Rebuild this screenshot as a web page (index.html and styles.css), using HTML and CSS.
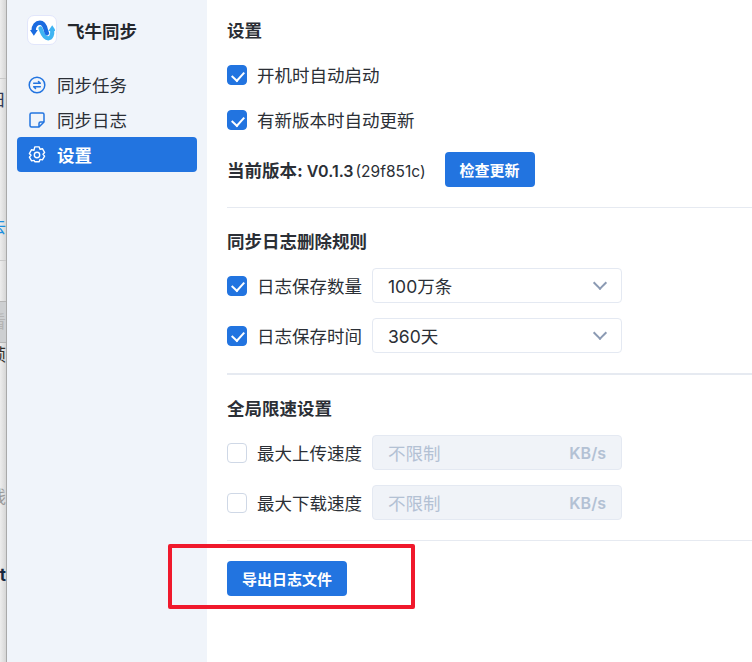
FILE: index.html
```html
<!DOCTYPE html>
<html lang="zh-CN">
<head>
    <meta charset="UTF-8">
    <title>飞牛同步</title>
    <link rel="stylesheet" href="styles.css">
</head>
<body>
    <!-- sliver of the window behind -->
    <div class="behind">
        <div class="behind-line line-a"></div>
        <div class="behind-text text-a">日</div>
        <div class="behind-text text-b">去</div>
        <div class="behind-line line-b"></div>
        <div class="behind-band"><span class="behind-text text-c">看</span></div>
        <div class="behind-text text-d">帧</div>
        <div class="behind-text text-e">线</div>
        <div class="behind-text text-f">t</div>
    </div>

    <div class="app">
        <aside class="sidebar">
            <div class="brand">
                <div class="brand-logo">
                    <svg width="25" height="21" viewBox="0 0 24 20" fill="none">
                        <path d="M10 8c1.500 3 2.500 9.500 7.500 9.500 3 0 4.200-3.500 3.800-7.500" stroke="#3fb4f2" stroke-width="4" stroke-linecap="round"/>
                        <path d="M17.500 10.500h7.500L21.300 5z" fill="#3fb4f2"/>
                        <path d="M3.500 10C3.500 5.500 6 2.500 9.500 2.500c4 0 5 4 5.700 7 .3 1.300.6 2.300 1.100 3" stroke="#1a6be0" stroke-width="4.200" stroke-linecap="round"/>
                        <path d="M0 9.500h7.500L3.700 15z" fill="#1a6be0"/>
                    </svg>
                </div>
                <span class="brand-name">飞牛同步</span>
            </div>
            <nav class="nav">
                <a class="nav-item">
                    <svg class="nav-icon" width="18" height="18" viewBox="0 0 18 18" fill="none" stroke="#2274e0" stroke-width="1.500" stroke-linecap="round" stroke-linejoin="round">
                        <circle cx="9" cy="9" r="7.800"/>
                        <path d="M5.700 7.300h6.600L10.500 5.500"/>
                        <path d="M12.300 10.700H5.700l1.800 1.800"/>
                    </svg>
                    同步任务
                </a>
                <a class="nav-item">
                    <svg class="nav-icon" width="18" height="18" viewBox="0 0 18 18" fill="none" stroke="#2274e0" stroke-width="1.500" stroke-linejoin="round">
                        <path d="M3.500 2h11A1.500 1.500 0 0 1 16 3.500V11l-5 5H3.500A1.500 1.500 0 0 1 2 14.500v-11A1.500 1.500 0 0 1 3.500 2z"/>
                        <path d="M16 11h-3.500a1.500 1.500 0 0 0-1.500 1.500V16" />
                    </svg>
                    同步日志
                </a>
                <a class="nav-item active">
                    <svg class="nav-icon" width="18" height="18" viewBox="0 0 18 18" fill="none" stroke="#fff" stroke-width="1.400" stroke-linejoin="round">
                        <path d="M6.800.9h4.400l.8 2.300 2.400-.5 2.200 3.800-1.600 1.800 1.600 1.800-2.200 3.800-2.400-.5-.8 2.300H6.800L6 14.400l-2.400.5-2.200-3.800L3 9.300 1.400 7.500l2.200-3.800L6 4.200z"/>
                        <circle cx="9" cy="9" r="2.700"/>
                    </svg>
                    设置
                </a>
            </nav>
        </aside>

        <main class="content">
            <section class="section section-general">
                <h2 class="section-title">设置</h2>
                <label class="check-line">
                    <span class="checkbox checked"></span><span class="check-text">开机时自动启动</span>
                </label>
                <label class="check-line">
                    <span class="checkbox checked"></span><span class="check-text">有新版本时自动更新</span>
                </label>
                <div class="version-row">
                    <span class="version"><b>当前版本:</b> <em>V0.1.3</em> <span class="version-hash">(29f851c)</span></span>
                    <button class="btn btn-check">检查更新</button>
                </div>
            </section>

            <section class="section section-log">
                <h2 class="section-title">同步日志删除规则</h2>
                <div class="field-row">
                    <span class="checkbox checked"></span>
                    <span class="field-label">日志保存数量</span>
                    <div class="select">100万条<span class="chevron"></span></div>
                </div>
                <div class="field-row">
                    <span class="checkbox checked"></span>
                    <span class="field-label">日志保存时间</span>
                    <div class="select">360天<span class="chevron"></span></div>
                </div>
            </section>

            <section class="section section-speed">
                <h2 class="section-title">全局限速设置</h2>
                <div class="field-row">
                    <span class="checkbox"></span>
                    <span class="field-label">最大上传速度</span>
                    <div class="input-off">不限制<span class="unit">KB/s</span></div>
                </div>
                <div class="field-row">
                    <span class="checkbox"></span>
                    <span class="field-label">最大下载速度</span>
                    <div class="input-off">不限制<span class="unit">KB/s</span></div>
                </div>
            </section>

            <div class="export">
                <button class="btn btn-export">导出日志文件</button>
            </div>
        </main>
    </div>

    <!-- red box drawn on the screenshot -->
    <div class="annotation"></div>
</body>
</html>
```

FILE: styles.css
```css
* {
    box-sizing: border-box;
}

html, body {
    height: 100%;
}

body {
    margin: 0;
    display: flex;
    overflow: hidden;
    position: relative;
    background-color: #fff;
    color: #2b2f36;
    font-family: Inter, "Noto Sans CJK SC", sans-serif;
    font-size: 17.5px;
}

.behind {
    position: relative;
    flex: 0 0 7px;
    background: linear-gradient(to right, #ededed, #d6d6d6);
    border-right: 1px solid #a9a9a9;
    overflow: hidden;
}

.behind-line {
    position: absolute;
    left: 0;
    right: 0;
    height: 1px;
    background-color: #c9c9c9;
}

.line-a { top: 78px; }
.line-b { top: 260px; }

.behind-band {
    position: absolute;
    top: 301px;
    left: 0;
    right: 0;
    height: 42px;
    background-color: #cdcfd1;
    border-top: 1px solid #b5b5b5;
    border-bottom: 1px solid #b5b5b5;
}

.behind-text {
    position: absolute;
    right: 0;
    font-size: 17px;
    line-height: 18px;
    white-space: nowrap;
}

.text-a { top: 91px; color: #333a55; }
.text-b { top: 218px; color: #1b8fe0; }
.text-c { top: 11px; color: #b4b4b4; }
.text-d { top: 346px; color: #33302a; }
.text-e { top: 488px; color: #9a9a9a; }
.text-f { top: 566px; right: 0; color: #16283f; font-weight: 700; }

.app {
    flex: 1;
    display: flex;
    min-width: 0;
}

.sidebar {
    flex: 0 0 200px;
    padding: 15px 10px 0;
    background-color: #f0f4fa;
}

.brand {
    display: flex;
    align-items: center;
    gap: 10px;
    padding-left: 10px;
    margin-bottom: 22px;
}

.brand-logo {
    display: flex;
    align-items: center;
    justify-content: center;
    width: 30px;
    height: 30px;
    background-color: #fff;
    border: 1px solid #e2e6fb;
    border-radius: 7px;
}

.brand-name {
    font-weight: 700;
    color: #24272d;
}

.nav-item {
    display: flex;
    align-items: center;
    gap: 11px;
    height: 35px;
    padding-left: 11px;
    border-radius: 4px;
    color: #2b2f36;
}

.nav-item.active {
    background-color: #2274e0;
    color: #fff;
    font-weight: 700;
}

.nav-icon {
    flex: none;
}

.content {
    flex: 1;
    min-width: 0;
    padding-left: 20px;
}

.section {
    border-bottom: 1px solid #e6eaf1;
}

.section-title {
    margin: 0;
    font-size: 17.5px;
    font-weight: 700;
    line-height: 24px;
    color: #2b2f36;
}

.section-general {
    height: 208px;
    padding-top: 19px;
}

.section-log {
    height: 167px;
    padding-top: 22px;
    border-bottom-width: 2px;
}

.section-speed {
    height: 166px;
    padding-top: 22px;
}

.check-line {
    display: flex;
    align-items: center;
    gap: 10px;
    height: 20px;
    margin-top: 25px;
}

.section-title + .check-line {
    margin-top: 22px;
}

.check-text {
    margin-top: -2px;
}

.checkbox {
    flex: none;
    position: relative;
    display: block;
    width: 20px;
    height: 20px;
    background-color: #fff;
    border: 1px solid #cfd8e6;
    border-radius: 4px;
}

.checkbox.checked {
    background-color: #2274e0;
    border-color: #2274e0;
}

.checkbox.checked::after {
    content: "";
    position: absolute;
    left: 6px;
    top: 2.500px;
    width: 6px;
    height: 10px;
    border: solid #fff;
    border-width: 0 2px 2px 0;
    transform: rotate(42deg);
}

.version-row {
    display: flex;
    align-items: center;
    gap: 19px;
    margin-top: 22px;
}

.version {
    white-space: nowrap;
}

.version b {
    font-weight: 700;
    margin-right: -1px;
}

.version em {
    font-style: normal;
    font-weight: 600;
    font-size: 16px;
}

.version-hash {
    font-size: 15.5px;
    margin-left: -3px;
}

.btn {
    height: 35px;
    padding: 0;
    border: none;
    border-radius: 4px;
    background-color: #2274e0;
    color: #fff;
    font-family: inherit;
    font-size: 15px;
    font-weight: 700;
}

.btn-check {
    width: 90px;
}

.btn-export {
    width: 120px;
}

.field-row {
    display: flex;
    align-items: center;
    height: 35px;
    margin-top: 15px;
}

.section-title + .field-row {
    margin-top: 14px;
}

.field-label {
    width: 125px;
    padding-left: 10px;
    white-space: nowrap;
}

.select, .input-off {
    display: flex;
    align-items: center;
    justify-content: space-between;
    width: 250px;
    height: 35px;
    padding: 0 15px;
    border: 1px solid #e4e9f2;
    border-radius: 4px;
}

.select {
    background-color: #fff;
}

.chevron {
    width: 10px;
    height: 10px;
    margin: -5px 1px 0 0;
    border: solid #8b9ab3;
    border-width: 0 2px 2px 0;
    transform: rotate(45deg);
}

.input-off {
    background-color: #f0f3f8;
    color: #b3c1d4;
}

.unit {
    font-size: 16px;
    font-weight: 600;
}

.export {
    padding-top: 20px;
}

.annotation {
    position: absolute;
    left: 168px;
    top: 544px;
    width: 247px;
    height: 65px;
    border: 4px solid #f0192c;
    border-radius: 2px;
}
```
